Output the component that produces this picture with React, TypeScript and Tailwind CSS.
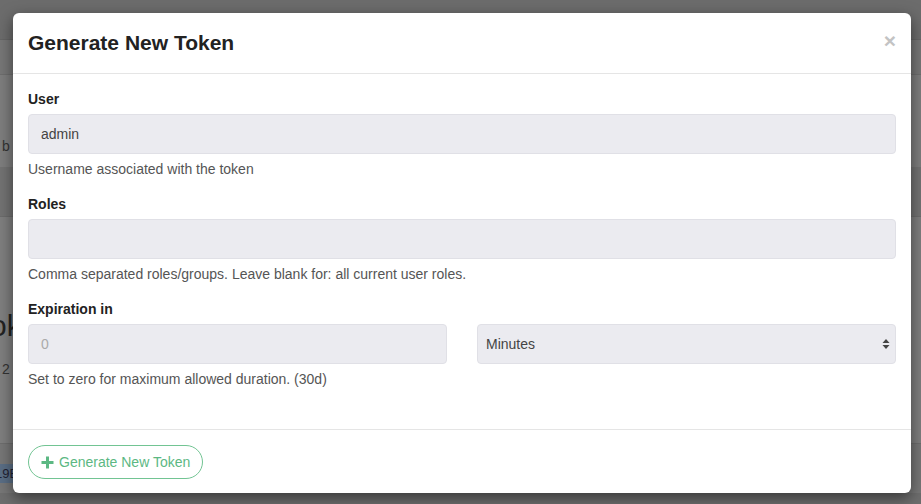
import React from "react";

export default function App() {
  const font = { fontFamily: '"Liberation Sans", Arial, Helvetica, sans-serif' };
  return (
    <div className="relative w-[921px] h-[504px] overflow-hidden bg-[#7b7b7b]" style={font}>
      {/* dimmed underlying page */}
      <div className="flex flex-col h-full">
        <div className="h-[40px] bg-[#6c6c6c] border-b border-[#656565]" />
        <div className="h-[35px] bg-[#777777] border-b border-[#6e6e6e]" />
        <div className="h-[92px] bg-[#7e7e7e] flex items-center">
          <span className="text-[14px] text-[#333] ml-[2px] mt-[50px]">b</span>
        </div>
        <div className="h-[50px] bg-[#737373] border-b border-[#6c6c6c]" />
        <div className="h-[226px] bg-[#7f7f7f] flex flex-col">
          <span className="text-[30px] text-[#222] ml-[-10px] mt-[94px] leading-none">ok</span>
          <span className="text-[14px] text-[#333] ml-[2px] mt-[18px]">2</span>
        </div>
        <div className="h-[50px] bg-[#777777] border-t border-[#6e6e6e] flex items-center">
          <span className="text-[13px] text-[#223] bg-[#5a6e85] px-[1px] ml-[-6px] mt-[10px]">19E</span>
        </div>
        <div className="flex-1 bg-[#6e6e6e]" />
      </div>

      {/* modal */}
      <div className="absolute left-[13px] top-[13px] w-[898px] h-[480px] bg-white rounded-[6px] shadow-[0_5px_15px_rgba(0,0,0,0.5)] flex flex-col">
        <div className="relative px-[15px] pt-[15px] pb-[16px] border-b border-[#e5e5e5]">
          <h4 className="text-[21px] leading-[29px] font-bold text-[#222]">Generate New Token</h4>
          <span className="absolute right-[15px] top-[13px] text-[21px] leading-[29px] font-bold text-[#c3c3c3]">×</span>
        </div>
        <div className="px-[15px] pt-[15px] pb-[25px] text-[14px] leading-[20px]">
          <div className="mb-[15px]">
            <label className="block font-bold text-[#222] mb-[5px]">User</label>
            <div className="h-[40px] rounded-[4px] bg-[#ebebf0] border border-[#e0e0e6] px-[12px] flex items-center text-[#444]">admin</div>
            <p className="mt-[5px] text-[#555]">Username associated with the token</p>
          </div>
          <div className="mb-[15px]">
            <label className="block font-bold text-[#222] mb-[5px]">Roles</label>
            <div className="h-[40px] rounded-[4px] bg-[#ebebf0] border border-[#e0e0e6]" />
            <p className="mt-[5px] text-[#555]">Comma separated roles/groups. Leave blank for: all current user roles.</p>
          </div>
          <div className="mb-[15px]">
            <label className="block font-bold text-[#222] mb-[5px]">Expiration in</label>
            <div className="grid grid-cols-2 gap-[30px]">
              <div className="h-[40px] rounded-[4px] bg-[#ebebf0] border border-[#e0e0e6] px-[12px] flex items-center text-[#aaa]">0</div>
              <div className="h-[40px] rounded-[4px] bg-[#ebebf0] border border-[#e0e0e6] pl-[8px] pr-[5px] flex items-center justify-between text-[#444]">
                <span>Minutes</span>
                <svg width="8" height="12" viewBox="0 0 8 12">
                  <path d="M4 1 L7.5 5 L0.5 5 Z" fill="#444" />
                  <path d="M4 11 L7.5 7 L0.5 7 Z" fill="#444" />
                </svg>
              </div>
            </div>
            <p className="mt-[5px] text-[#555]">Set to zero for maximum allowed duration. (30d)</p>
          </div>
        </div>
        <div className="border-t border-[#e5e5e5] px-[15px] py-[15px]">
          <button className="h-[34px] px-[12px] rounded-full border border-[#72c493] bg-white text-[#5cb883] text-[14px] flex items-center gap-[5px]">
            <svg width="13" height="13" viewBox="0 0 13 13">
              <path d="M5 0.5h3v4.5h4.5v3h-4.5v4.5h-3v-4.5h-4.5v-3h4.5z" fill="#5cb883" />
            </svg>
            <span>Generate New Token</span>
          </button>
        </div>
      </div>
    </div>
  );
}
